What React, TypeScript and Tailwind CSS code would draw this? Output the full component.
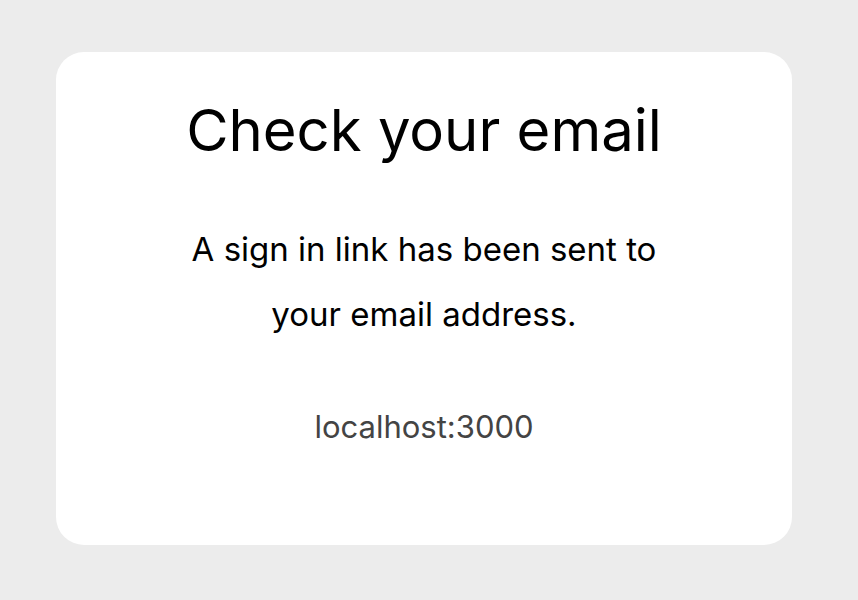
export default function App() {
  return (
    <div className="min-h-[600px] bg-[#ececec] pl-[56px] pt-[52px] font-['Inter',sans-serif]">
      <div className="flex h-[493px] w-[736px] flex-col items-center rounded-[28px] bg-white pt-[43px] text-center">
        <h1 className="text-[58px] leading-[70px] text-black">Check your email</h1>
        <p className="mt-[52px] text-[33px] leading-[65px] text-black">
          A sign in link has been sent to
          <br />
          your email address.
        </p>
        <p className="mt-[61px] text-[31px] leading-[38px] text-[#444]">localhost:3000</p>
      </div>
    </div>
  );
}
